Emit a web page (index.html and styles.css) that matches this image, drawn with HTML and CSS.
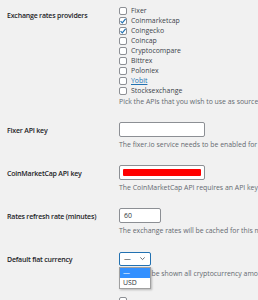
FILE: index.html
```html
<!DOCTYPE html>
<html>
<head>
<meta charset="utf-8">
<link rel="stylesheet" href="styles.css">
</head>
<body>
<div class="form">
  <div class="row row-providers">
    <div class="th">Exchange rates providers</div>
    <div class="td">
      <div class="checks">
        <label class="check"><span class="box"></span><span>Fixer</span></label>
        <label class="check"><span class="box"><svg viewBox="0 0 8 8" class="tick"><path d="M1.6 4.2 L3.3 5.9 L6.6 1.8" /></svg></span><span>Coinmarketcap</span></label>
        <label class="check"><span class="box"><svg viewBox="0 0 8 8" class="tick"><path d="M1.6 4.2 L3.3 5.9 L6.6 1.8" /></svg></span><span>Coingecko</span></label>
        <label class="check"><span class="box"></span><span>Coincap</span></label>
        <label class="check"><span class="box"></span><span>Cryptocompare</span></label>
        <label class="check"><span class="box"></span><span>Bittrex</span></label>
        <label class="check"><span class="box"></span><span>Poloniex</span></label>
        <label class="check"><span class="box"></span><a class="link" href="#">Yobit</a></label>
        <label class="check"><span class="box"></span><span>Stocksexchange</span></label>
      </div>
      <p class="desc">Pick the APIs that you wish to use as sources for exchange rates.</p>
    </div>
  </div>

  <div class="row">
    <div class="th">Fixer API key</div>
    <div class="td">
      <div class="input wide"></div>
      <p class="desc">The fixer.io service needs to be enabled for a key to work.</p>
    </div>
  </div>

  <div class="row">
    <div class="th">CoinMarketCap API key</div>
    <div class="td">
      <div class="input wide"><span class="redact"></span></div>
      <p class="desc">The CoinMarketCap API requires an API key.</p>
    </div>
  </div>

  <div class="row">
    <div class="th">Rates refresh rate (minutes)</div>
    <div class="td">
      <div class="input small">60</div>
      <p class="desc">The exchange rates will be cached for this many minutes.</p>
    </div>
  </div>

  <div class="row">
    <div class="th">Default fiat currency</div>
    <div class="td td-select">
      <div class="select"><span>—</span><svg class="chev" viewBox="0 0 8 8"><path d="M1.5 2.8 L4 5.2 L6.5 2.8"/></svg></div>
      <p class="desc">Users will be shown all cryptocurrency amounts in this currency.</p>
      <div class="dropdown">
        <div class="opt active">—</div>
        <div class="opt">USD</div>
      </div>
    </div>
  </div>

  <div class="row row-last">
    <div class="th"></div>
    <div class="td"><span class="box"></span></div>
  </div>
</div>
</body>
</html>
```
FILE: styles.css
```css
html, body {
  margin: 0;
  padding: 0;
  background: #f1f1f1;
  overflow: hidden;
}
body {
  font-family: "Open Sans", "Noto Sans", sans-serif;
  font-size: 6.9px;
  color: #3c434a;
  width: 258px;
  height: 300px;
}
.form {
  padding-left: 7px;
}
.row {
  display: flex;
}
.th {
  width: 112px;
  flex: none;
  padding-top: 11px;
  font-size: 7px;
  font-weight: 600;
  letter-spacing: -0.2px;
  color: #1d2327;
  line-height: 9px;
  white-space: nowrap;
}
.td {
  padding: 7.5px 0;
  flex: 1;
  min-width: 0;
  white-space: nowrap;
  overflow: visible;
  position: relative;
}
.row-providers .td {
  padding-top: 6px;
}
.checks {
  display: flex;
  flex-direction: column;
}
.check {
  display: flex;
  align-items: center;
  height: 10px;
  gap: 4px;
  line-height: 10px;
}
.box {
  width: 8px;
  height: 8px;
  box-sizing: border-box;
  border: 1px solid #8c8f94;
  border-radius: 2px;
  background: #fff;
  display: inline-block;
  position: relative;
  flex: none;
}
.tick {
  position: absolute;
  left: -1px;
  top: -1px;
  width: 8px;
  height: 8px;
  fill: none;
  stroke: #2271b1;
  stroke-width: 1.2;
}
.link {
  color: #2271b1;
  text-decoration: underline;
}
.desc {
  margin: 3px 0 0;
  line-height: 10px;
  color: #646970;
}
.row-providers .desc {
  margin-top: 1px;
}
.input {
  height: 15px;
  box-sizing: border-box;
  border: 1px solid #8c8f94;
  border-radius: 2px;
  background: #fff;
  color: #2c3338;
  line-height: 13px;
  padding: 0 4px;
  position: relative;
}
.wide {
  width: 86px;
}
.small {
  width: 42px;
}
.redact {
  position: absolute;
  left: 3px;
  top: 3px;
  width: 78px;
  height: 7px;
  background: #ff0000;
  border-radius: 1px;
}
.td-select {
  padding-top: 8px;
}
.select {
  width: 32px;
  height: 14px;
  box-sizing: border-box;
  border: 1px solid #2271b1;
  border-radius: 2px;
  background: #fff;
  display: flex;
  align-items: center;
  justify-content: space-between;
  padding: 0 4px;
  color: #2c3338;
}
.chev {
  width: 7px;
  height: 7px;
  fill: none;
  stroke: #50575e;
  stroke-width: 1;
}
.dropdown {
  position: absolute;
  left: 0;
  top: 23px;
  width: 32px;
  box-sizing: border-box;
  border: 1px solid #a0a0a0;
  background: #fff;
  box-shadow: 1px 1px 2px rgba(0,0,0,0.25);
  padding: 0;
}
.opt {
  height: 10px;
  line-height: 10px;
  padding: 0 3px;
  color: #2c3338;
}
.opt.active {
  background: #3390ff;
  color: #fff;
}
.row-last .td {
  padding-top: 11px;
}
```
